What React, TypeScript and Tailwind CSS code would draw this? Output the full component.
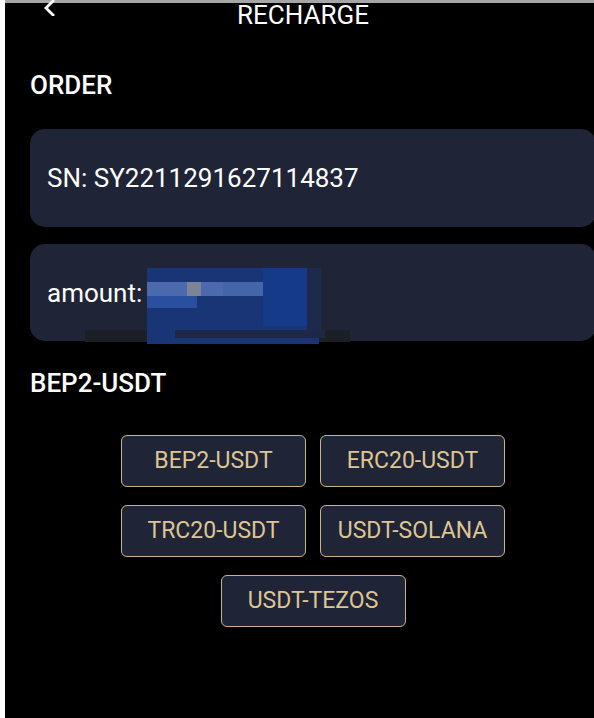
import React from 'react';

const networks = ['BEP2-USDT', 'ERC20-USDT', 'TRC20-USDT', 'USDT-SOLANA', 'USDT-TEZOS'];

const Recharge: React.FC = () => {
  return (
    <div
      className="flex h-[718px] w-full overflow-hidden bg-black text-white"
      style={{ fontFamily: 'Roboto, "Liberation Sans", sans-serif' }}
    >
      <div className="w-[5px] shrink-0 bg-white" />
      <div className="flex w-[616px] shrink-0 flex-col">
        <div className="h-[3px] bg-[#a6a6a6]" />

        {/* header */}
        <div className="relative flex h-[24px] items-center justify-center pr-[20px]">
          <button className="absolute left-[38px] top-[-3px] text-white">
            <svg width="14" height="16" viewBox="0 0 14 16" fill="none">
              <polyline points="10,1 3,8 10,15" stroke="white" strokeWidth="2.8" strokeLinecap="square" />
            </svg>
          </button>
          <h1 className="text-[26px] leading-none">RECHARGE</h1>
        </div>

        <div className="px-[25px]">
          <h2 className="mt-[45px] text-[26px] font-medium leading-none">ORDER</h2>

          <div className="mt-[31px] flex h-[98px] items-center rounded-[15px] bg-[#1f2437] px-[17px]">
            <span className="text-[26px] leading-none">SN: SY2211291627114837</span>
          </div>

          <div className="relative mt-[17px] flex h-[97px] items-center rounded-[15px] bg-[#1f2437] px-[17px]">
            <span className="text-[26px] leading-none">amount: $</span>
            {/* redaction blur */}
            <svg className="absolute left-[55px] top-[24px]" width="265" height="80" viewBox="0 0 265 80">
              <rect x="0" y="62" width="265" height="12" fill="#1c1f26" />
              <rect x="62" y="0" width="172" height="76" fill="#1a3575" />
              <rect x="62" y="14" width="110" height="14" fill="#4a6aad" />
              <rect x="102" y="14" width="14" height="14" fill="#7c8496" />
              <rect x="62" y="28" width="50" height="12" fill="#2b4fa0" />
              <rect x="138" y="14" width="40" height="14" fill="#4465a8" />
              <rect x="178" y="0" width="44" height="58" fill="#163a8a" />
              <rect x="222" y="0" width="14" height="68" fill="#1d2a4e" />
              <rect x="90" y="62" width="150" height="8" fill="#1d2848" />
            </svg>
          </div>

          <h2 className="mt-[29px] text-[26px] font-medium leading-none">BEP2-USDT</h2>

          <div className="mx-auto mt-[39px] flex w-[384px] flex-wrap justify-center gap-x-[14px] gap-y-[18px]">
            {networks.map((n) => (
              <button
                key={n}
                className="flex h-[52px] w-[185px] items-center justify-center rounded-[6px] border-[1.5px] border-[#cdb384] bg-[#1f2437] text-[23px] text-[#dec592]"
              >
                {n}
              </button>
            ))}
          </div>
        </div>
      </div>
    </div>
  );
};

export default function App() {
  return <Recharge />;
}
